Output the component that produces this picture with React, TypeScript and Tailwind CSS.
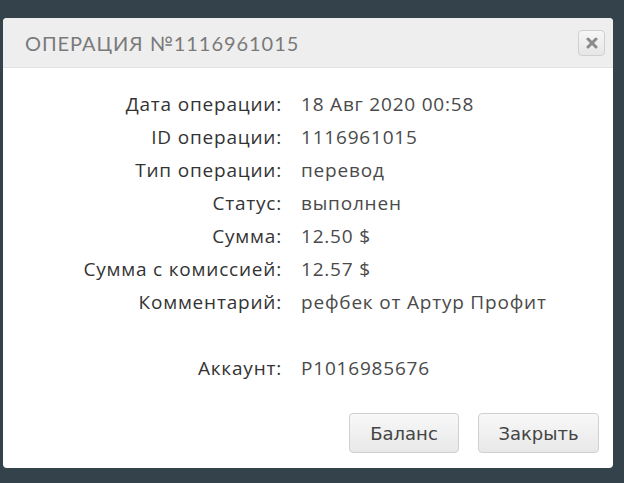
export default function App() {
  const rows: [string, string][] = [
    ["Дата операции:", "18 Авг 2020 00:58"],
    ["ID операции:", "1116961015"],
    ["Тип операции:", "перевод"],
    ["Статус:", "выполнен"],
    ["Сумма:", "12.50 $"],
    ["Сумма с комиссией:", "12.57 $"],
    ["Комментарий:", "рефбек от Артур Профит"],
  ];

  return (
    <div className="w-[624px] h-[483px] bg-[#34434b] pt-[18px] pl-[3px] overflow-hidden">
      <div className="w-[610px] h-[450px] bg-white rounded-[4px] overflow-hidden flex flex-col">
        <div className="h-[50px] bg-[#eeeeee] border-b border-[#e2e2e2] flex items-center justify-between pl-[22px] pr-[8px]">
          <span className="text-[20px] text-[#7a7a7a] tracking-[0.95px] font-['Lato',sans-serif]">ОПЕРАЦИЯ №1116961015</span>
          <button className="w-[27px] h-[26px] rounded-[4px] border border-[#cfcfcf] bg-gradient-to-b from-[#f7f7f7] to-[#e6e6e6] flex items-center justify-center">
            <svg width="12" height="12" viewBox="0 0 12 12">
              <path d="M2 2 L10 10 M10 2 L2 10" stroke="#8a8a8a" strokeWidth="3" strokeLinecap="round" />
            </svg>
          </button>
        </div>
        <div className="flex-1 flex flex-col pt-[20px] font-['Open_Sans',sans-serif] text-[19px] tracking-[0.8px] text-[#333333]">
          {rows.map(([l, v]) => (
            <div key={l} className="flex h-[33px] items-center">
              <div className="w-[279px] text-right">{l}</div>
              <div className="pl-[19px] text-[#4a4a4a]">{v}</div>
            </div>
          ))}
          <div className="h-[33px]" />
          <div className="flex h-[33px] items-center">
            <div className="w-[279px] text-right">Аккаунт:</div>
            <div className="pl-[19px] text-[#4a4a4a]">P1016985676</div>
          </div>
          <div className="flex justify-end gap-[19px] pr-[14px] mt-[28px]">
            <button className="w-[110px] h-[40px] rounded-[4px] border border-[#d0d0d0] bg-gradient-to-b from-[#f8f8f8] to-[#e8e8e8] text-[18px] tracking-normal text-[#444444] font-['DejaVu_Sans',sans-serif]">Баланс</button>
            <button className="w-[121px] h-[40px] rounded-[4px] border border-[#d0d0d0] bg-gradient-to-b from-[#f8f8f8] to-[#e8e8e8] text-[18px] tracking-normal text-[#444444] font-['DejaVu_Sans',sans-serif]">Закрыть</button>
          </div>
        </div>
      </div>
    </div>
  );
}
